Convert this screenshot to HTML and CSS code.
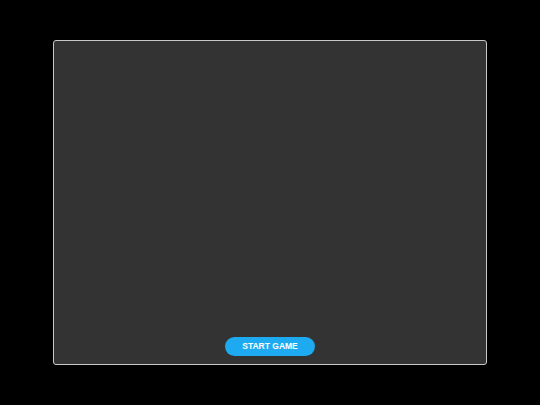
FILE: index.html
```html
<!DOCTYPE html>
<html>
<head>
<meta charset="utf-8">
<link rel="stylesheet" href="styles.css">
</head>
<body>
<div class="stage">
  <div class="game">
    <button class="start">START GAME</button>
  </div>
</div>
</body>
</html>
```
FILE: styles.css
```css
html, body {
  margin: 0;
  padding: 0;
  background: #000;
  width: 540px;
  height: 405px;
  overflow: hidden;
}
.stage {
  width: 540px;
  height: 405px;
  display: flex;
  align-items: center;
  justify-content: center;
}
.game {
  box-sizing: border-box;
  width: 434px;
  height: 325px;
  border: 1px solid #c8c8c8;
  border-radius: 3px;
  background: #333333;
  display: flex;
  flex-direction: column;
  align-items: center;
  justify-content: flex-end;
  padding-bottom: 8px;
}
.start {
  width: 90px;
  height: 19px;
  border: none;
  border-radius: 10px;
  background: #1eaaf1;
  color: #fff;
  font-family: "Liberation Sans", Arial, sans-serif;
  font-weight: bold;
  font-size: 8.5px;
  padding: 0 0 1px 0;
  margin: 0;
}
```
